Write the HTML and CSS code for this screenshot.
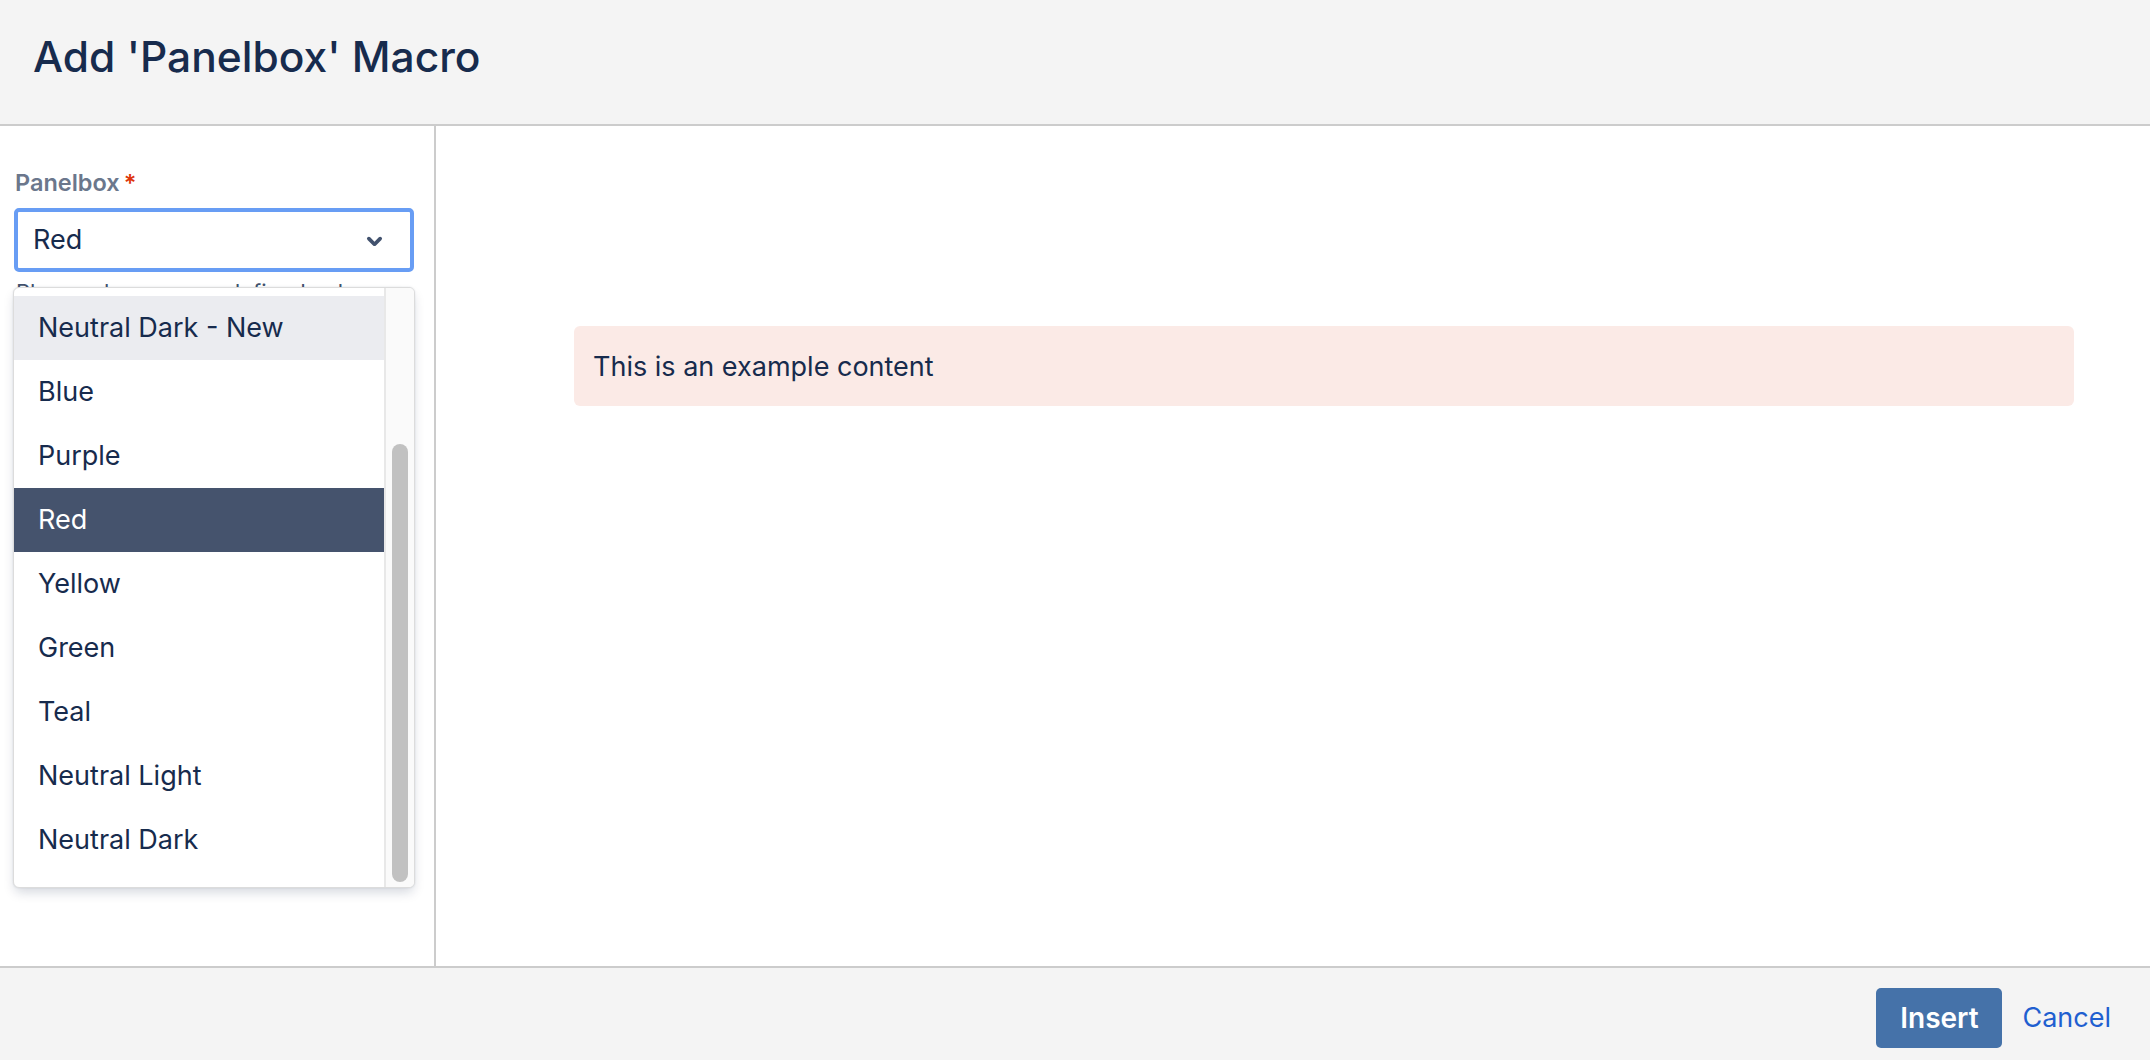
FILE: index.html
```html
<!DOCTYPE html>
<html lang="en">
<head>
<meta charset="utf-8">
<title>Add 'Panelbox' Macro</title>
<link rel="stylesheet" href="styles.css">
</head>
<body>
<div class="dialog">
  <header class="dialog-header">
    <h1 class="dialog-title">Add 'Panelbox' Macro</h1>
  </header>
  <main class="dialog-body">
    <aside class="sidebar">
      <label class="field-label">Panelbox<span class="required">*</span></label>
      <div class="select">
        <span class="select-value">Red</span>
        <svg class="select-chevron" width="45" height="45" viewBox="0 0 24 24" aria-hidden="true">
          <path fill="#42526e" d="M8.292 10.293a1.009 1.009 0 0 0 0 1.419l2.939 2.965c.218.215.5.322.779.322s.556-.107.769-.322l2.93-2.955a1.01 1.01 0 0 0 0-1.419.987.987 0 0 0-1.406 0l-2.298 2.317-2.307-2.327a.99.99 0 0 0-1.406 0z"/>
        </svg>
      </div>
      <p class="help-text">Please choose a predefined color scheme.</p>
      <div class="menu">
        <ul class="menu-list">
          <li class="menu-item is-hover">Neutral Dark - New</li>
          <li class="menu-item">Blue</li>
          <li class="menu-item">Purple</li>
          <li class="menu-item is-selected">Red</li>
          <li class="menu-item">Yellow</li>
          <li class="menu-item">Green</li>
          <li class="menu-item">Teal</li>
          <li class="menu-item">Neutral Light</li>
          <li class="menu-item">Neutral Dark</li>
        </ul>
        <div class="scroll-track"><div class="scroll-thumb"></div></div>
      </div>
    </aside>
    <section class="preview">
      <div class="panel-red">This is an example content</div>
    </section>
  </main>
  <footer class="dialog-footer">
    <button class="btn-primary" type="button">Insert</button>
    <a class="btn-link" href="#">Cancel</a>
  </footer>
</div>
</body>
</html>
```
FILE: styles.css
```css
* { box-sizing: border-box; }

html, body {
  margin: 0;
  padding: 0;
  height: 100%;
}

body {
  font-family: "Inter", "Noto Sans", sans-serif;
  color: #172b4d;
  background: #ffffff;
  overflow: hidden;
}

.dialog {
  display: flex;
  flex-direction: column;
  height: 1060px;
}

.dialog-header {
  flex: 0 0 126px;
  background: #f4f4f4;
  border-bottom: 2px solid #cccccc;
  padding: 31px 0 0 33px;
}

.dialog-title {
  margin: 0;
  font-size: 42.5px;
  line-height: 52px;
  font-weight: 500;
  color: #172b4d;
  letter-spacing: 0;
}

.dialog-body {
  flex: 1 1 auto;
  display: flex;
  min-height: 0;
}

.sidebar {
  position: relative;
  flex: 0 0 436px;
  border-right: 2px solid #cccccc;
  padding: 43px 0 0 14px;
}

.field-label {
  display: block;
  font-size: 23.5px;
  line-height: 28px;
  font-weight: 600;
  color: #6b778c;
  padding-left: 1px;
}

.required {
  color: #de350b;
  margin-left: 4px;
}

.select {
  margin-top: 11px;
  width: 400px;
  height: 64px;
  border: 4px solid #689df4;
  border-radius: 5px;
  background: #ffffff;
  display: flex;
  align-items: center;
  justify-content: space-between;
  padding: 0 13px 0 15px;
}

.select-value {
  font-size: 27px;
  line-height: 56px;
  color: #172b4d;
}

.select-chevron {
  display: block;
}

.help-text {
  margin: 6px 0 0 2px;
  font-size: 22px;
  line-height: 28px;
  color: #42526e;
}

.menu {
  position: absolute;
  top: 161px;
  left: 13px;
  width: 402px;
  height: 601px;
  background: #ffffff;
  border: 1px solid #dcdcdc;
  border-radius: 6px;
  box-shadow: 0 6px 12px -2px rgba(9, 30, 66, 0.18), 0 0 2px rgba(9, 30, 66, 0.12);
  display: flex;
  overflow: hidden;
}

.menu-list {
  list-style: none;
  margin: 0;
  padding: 8px 0 0 0;
  flex: 0 0 370px;
}

.menu-item {
  height: 64px;
  line-height: 64px;
  font-size: 27px;
  padding-left: 24px;
  color: #172b4d;
  white-space: nowrap;
}

.menu-item.is-hover {
  background: #ebecf0;
}

.menu-item.is-selected {
  background: #45536d;
  color: #ffffff;
}

.scroll-track {
  flex: 1 1 auto;
  background: #fafafa;
  border-left: 2px solid #e8e8e8;
  padding: 156px 6px 6px 6px;
}

.scroll-thumb {
  width: 16px;
  height: 438px;
  border-radius: 8px;
  background: #c1c1c1;
}

.preview {
  flex: 1 1 auto;
  padding: 200px 0 0 138px;
}

.panel-red {
  width: 1500px;
  height: 80px;
  background: #fbeae6;
  border-radius: 6px;
  display: flex;
  align-items: center;
  padding-left: 19px;
  font-size: 27px;
  color: #172b4d;
}

.dialog-footer {
  flex: 0 0 94px;
  background: #f4f4f4;
  border-top: 2px solid #cccccc;
  display: flex;
  align-items: flex-start;
  justify-content: flex-end;
  padding: 20px 39px 0 0;
  gap: 20px;
}

.btn-primary {
  height: 60px;
  width: 126px;
  border: 0;
  border-radius: 5px;
  background: #4572a9;
  color: #ffffff;
  font-family: "Inter", "Noto Sans", sans-serif;
  font-size: 28px;
  font-weight: 600;
  padding: 0;
  cursor: pointer;
}

.btn-link {
  font-size: 27px;
  line-height: 60px;
  color: #1f5fd0;
  text-decoration: none;
}
```
